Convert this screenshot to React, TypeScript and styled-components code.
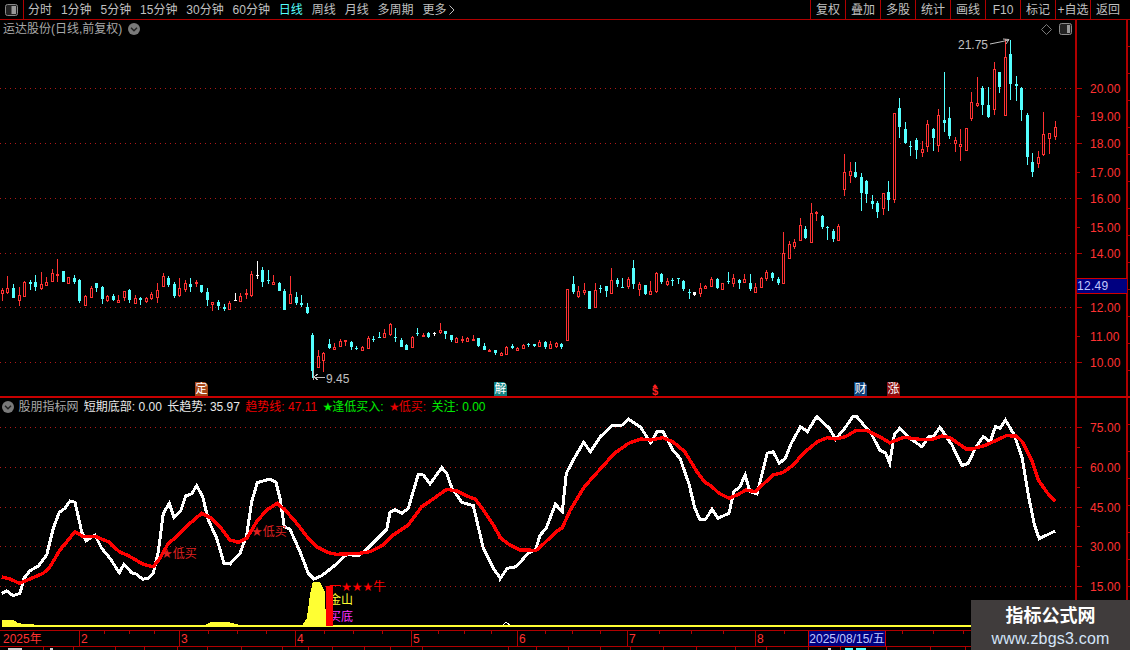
import React from 'react';
import styled, { createGlobalStyle } from 'styled-components';

const RED = '#b00000';
const FONT = '"Liberation Sans", "Noto Sans CJK SC", sans-serif';

const Global = createGlobalStyle`
  html, body { margin: 0; padding: 0; background: #000; overflow: hidden; }
  #root { width: 1130px; height: 650px; }
`;

const Page = styled.div`
  position: relative;
  width: 1130px;
  height: 650px;
  background: #000;
  overflow: hidden;
  display: flex;
  flex-direction: column;
  font: 12px/1 ${FONT};
  color: #c0c0c0;
`;

/* ---------- toolbar ---------- */
const Toolbar = styled.div`
  flex: none;
  height: 19px;
  display: flex;
  align-items: stretch;
  border-bottom: 1px solid ${RED};
`;
const ToggleCell = styled.div`
  width: 23px;
  border-right: 1px solid ${RED};
  display: flex;
  align-items: center;
  justify-content: center;
  box-sizing: content-box;
`;
const Periods = styled.div`
  display: flex;
  align-items: center;
  gap: 8.9px;
  padding-left: 4px;
`;
const Period = styled.span<{ $active?: boolean }>`
  color: ${(p) => (p.$active ? '#54ffff' : '#c0c0c0')};
  white-space: nowrap;
`;
const Chevron = styled.svg`
  display: inline-block;
  margin-left: 3px;
  vertical-align: -1px;
`;
const Actions = styled.div`
  margin-left: auto;
  padding-right: 5px;
  display: flex;
`;
const Action = styled.div`
  width: 35px;
  box-sizing: border-box;
  border-left: 1px solid ${RED};
  display: flex;
  align-items: center;
  justify-content: center;
  white-space: nowrap;
`;

/* ---------- panels ---------- */
const Panel = styled.div<{ $height: number }>`
  flex: none;
  height: ${(p) => p.$height}px;
  display: flex;
`;
const ChartColumn = styled.div`
  position: relative;
  width: 1075px;
  display: flex;
  flex-direction: column;
`;
const AxisColumn = styled.div`
  position: relative;
  width: 49px;
  border-left: 2px solid ${RED};
`;
const Gutter = styled.div`
  width: 2px;
  border-left: 2px solid ${RED};
  flex: 1;
  background: repeating-linear-gradient(to bottom, transparent 0 26px, ${RED} 26px 27px);
`;
const IndicatorWrap = styled.div`
  flex: none;
  border-top: 2px solid #c80000;
`;
const TitleRow = styled.div`
  height: 18px;
  flex: none;
  display: flex;
  align-items: center;
  gap: 6px;
  padding: 0 3px;
  color: #a8a8a8;
`;
const TitleIcons = styled.div`
  margin-left: auto;
  display: flex;
  align-items: center;
  gap: 7px;
`;
const LegendRow = styled.div`
  height: 17px;
  flex: none;
  display: flex;
  align-items: center;
  gap: 5.4px;
  padding-left: 2px;
  white-space: nowrap;
`;
const LegendName = styled.span`
  color: #a8a8a8;
  margin: 0 0 0 -1px;
`;
const LegendItem = styled.span<{ $color: string }>`
  color: ${(p) => p.$color};
`;
const Star = styled.span`
  font-family: "DejaVu Sans", sans-serif;
  font-size: 12px;
  margin-right: -1px;
`;
const ChartSvg = styled.svg`
  display: block;
  flex: none;
`;
const AxisSvg = styled.svg`
  display: block;
`;
const AxisLabel = styled.text`
  fill: #ff3232;
  font: 12px ${FONT};
  letter-spacing: 0.1px;
`;
const Note = styled.text<{ $color: string }>`
  fill: ${(p) => p.$color};
  font: 12px ${FONT};
`;
const EventGlyph = styled.text`
  fill: #ff2020;
  font: bold 11px "Liberation Sans", sans-serif;
`;
const PriceTag = styled.div<{ $top: number }>`
  position: absolute;
  left: 0;
  top: ${(p) => p.$top}px;
  width: 50px;
  height: 16px;
  box-sizing: border-box;
  background: #000080;
  border-top: 1px solid #d00000;
  border-bottom: 1px solid #d00000;
  color: #c0c8ff;
  padding-left: 0;
  display: flex;
  align-items: center;
  letter-spacing: 0.3px;
`;
const EventBadge = styled.div<{ $left: number; $bg: string }>`
  position: absolute;
  left: ${(p) => p.$left}px;
  top: 362px;
  width: 13px;
  height: 14px;
  background: ${(p) => p.$bg};
  color: #fff;
  display: flex;
  align-items: center;
  justify-content: center;
  clip-path: polygon(0 0, 10px 0, 13px 3px, 13px 14px, 0 14px);
  line-height: 1;
`;

/* ---------- time axis ---------- */
const TimeAxis = styled.div`
  position: relative;
  flex: none;
  height: 15px;
  display: flex;
  border-top: 1px solid ${RED};
  border-bottom: 1px solid ${RED};
`;
const MonthCell = styled.div<{ $width: number; $first?: boolean }>`
  flex: none;
  width: ${(p) => p.$width}px;
  box-sizing: border-box;
  border-left: ${(p) => (p.$first ? 'none' : `1px solid ${RED}`)};
  padding-left: ${(p) => (p.$first ? 3 : 1)}px;
  color: #ff3232;
  display: flex;
  align-items: center;
`;
const DateBox = styled.div`
  position: absolute;
  left: 808px;
  top: 0;
  width: 78px;
  height: 15px;
  box-sizing: border-box;
  background: #000080;
  border-left: 1px solid #d00000;
  border-right: 1px solid #d00000;
  color: #c0c8ff;
  display: flex;
  align-items: center;
  justify-content: center;
  white-space: nowrap;
`;
const TickLayer = styled.svg`
  position: absolute;
  left: 0;
  top: 0;
`;
const FooterSvg = styled.svg`
  display: block;
  flex: none;
`;

/* ---------- watermark ---------- */
const Watermark = styled.div`
  position: absolute;
  left: 971px;
  top: 600px;
  width: 159px;
  height: 50px;
  background: #403c3c;
  display: flex;
  flex-direction: column;
  align-items: center;
  padding-top: 6px;
  box-sizing: border-box;
  gap: 3px;
`;
const MarkTitle = styled.div`
  color: #fff;
  font: bold 18px/21px ${FONT};
`;
const MarkUrl = styled.div`
  color: #d4e4f8;
  font: 16px/17px ${FONT};
  letter-spacing: 0.2px;
`;

/* ---------- data ---------- */
const parse = (s: string, base: number) =>
  s.trim().split(',').map((r) => {
    const [t, a, b, c, d] = r.trim().split(' ');
    return { t, hi: base + +a / 3, top: base + +b / 3, bot: base + +c / 3, lo: base + +d / 3 };
  });

const candles = [
  ...parse(`r 115 120 130 152,r 78 113 125 132,c 102 113 144 144,r 110 135 150 167,r 93 96 137 137,c 90 95 101 120,c 75 95 110 123,r 67 102 114 120,r 80 96 104 107,r 57 69 92 95,r 27 72 73 95,c 62 62 95 95,r 80 82 100 102,c 75 84 96 103,c 88 90 152 158,r 135 138 164 165,r 108 114 141 143,c 98 98 113 127,c 108 111 148 161,r 135 139 152 155,c 132 138 150 152,r 136 151 158 158,r 123 124 141 152,c 117 120 150 159,r 135 145 159 160,c 142 145 150 165,r 141 143 151 160,r 125 131 143 150,r 99 121 143 158,r 70 78 107 110,c 78 84 104 110,c 95 102 139 143,r 84 115 135 140,r 90 100 119 127,c 84 103 110 126,r 91 96 97 110,c 105 105 127 130,c 115 127 150 168,r 156 157 163 183,c 150 156 168 180,c 162 170 176 183,r 154 159 176 176,w 130 150 151 152,r 128 138 152 154,r 118 130 134 148,r 64 72 134 140,w 33 76 77 88,c 52 60 95 110,c 60 90 92 102,r 75 96 101 102,c 96 99 123 124,c 117 123 179 179,r 78 133 161 162,c 127 141 159 165,c 136 159 164 172,c 160 171 189 191,c 250 255 362 385,r 300 318 350 352,r 305 310 332 366,c 267 282 295 297,r 278 292 299 300,r 268 273 287 288,r 270 271 273 288,c 272 276 290 299,c 287 295 296 300,r 287 290 300 303,r 257 265 294 297,c 257 266 266 275,c 247 260 261 264,r 238 249 261 264,r 220 222 252 258,c 235 261 262 276,c 265 270 290 291,c 282 286 299 300,r 258 260 291 294,c 235 248 249 258,r 250 254 256 258,c 247 250 261 264,w 246 248 249 258,r 220 240 245 252,c 243 244 252 267,c 256 256 270 276,r 262 264 275 276,r 258 267 269 279,r 262 265 273 276,r 255 267 268 273,c 264 265 287 290,c 280 288 300 301,r 296 299 301 306,c 300 301 309 315,r 307 308 315 315,r 288 290 311 312,c 282 288 294 298,r 290 294 299 303,r 282 286 296 297,c 279 281 282 292,c 282 283 287 291,r 270 277 288 289,c 273 276 292 298,r 274 283 294 295,r 275 278 286 293,c 278 283 291 297,r 117 118 270 272,c 78 102 126 132,r 108 123 138 145,r 98 119 126 135,c 123 124 176 178,r 98 121 173 174,c 105 115 116 128,c 108 108 123 141,r 54 91 131 132,c 83 90 102 110,c 83 110 112 115,r 81 87 109 116,c 30 55 102 117,r 96 101 117 138,c 104 105 132 136,r 93 124 134 136,r 66 69 123 130,c 68 72 96 102,r 84 92 101 107,c 84 90 94 108,c 84 85 87 102`, 250),
  ...parse(`c 570 573 596 602,c 597 607 608 626,w 605 607 615 617,r 578 595 611 620,r 585 587 594 596,r 562 567 588 590,c 565 567 594 597,r 578 580 597 600,c 546 573 576 582,r 552 565 581 590,c 568 570 578 596,r 552 568 576 580,c 552 579 597 603,r 578 590 605 606,r 560 563 590 595,r 540 547 564 572,c 546 549 563 572,c 562 567 578 585,r 427 490 581 582,r 453 463 505 507,r 448 456 468 476,r 385 406 452 454,c 408 417 444 447,r 340 370 458 459,r 364 367 371 392,c 375 378 412 416,c 408 410 411 450,c 418 423 446 456,r 403 408 449 450,r 192 247 299 318,r 216 244 257 280,c 216 247 261 264,c 248 262 308 363,c 270 272 311 340,c 315 334 342 357,c 332 338 366 384,r 310 310 356 375,c 273 307 330 363,r 69 70 329 339`, 90),
  ...parse(`c 190 219 276 309,c 262 282 325 327,c 319 334 335 362,c 309 316 345 372,r 319 343 353 366,r 255 268 335 351,c 279 282 309 348,r 222 241 332 351,c 111 255 264 291,c 216 249 303 312,r 306 316 326 351,r 282 328 335 378,r 280 280 345 347,r 171 202 250 258,r 126 204 210 216,c 153 159 210 240,c 156 210 246 249,r 81 103 223 240,c 111 111 156 174,r 12 67 242 243,c 15 57 147 195,c 123 147 153 198,c 156 159 225 258,c 234 240 366 390,c 354 381 411 426,r 349 366 384 399,r 231 297 357 363,r 294 295 311 357,r 258 277 303 315`, 35),
];

const COLORS: Record<string, string> = { r: '#ff3232', c: '#54ffff', w: '#ffffff' };

const fromLeft = (pts: number[][]) => pts.map(([x, y]) => [x / 3, 395 + y / 3]);
const fromRight = (pts: number[][]) => pts.map(([x, y]) => [500 + x / 2.489, 395 + y / 3]);
const toPoints = (pts: number[][]) => pts.map(([x, y]) => `${x.toFixed(1)},${y.toFixed(1)}`).join(' ');

const whiteLine = toPoints([
  ...fromLeft([[5,595],[20,588],[40,602],[60,595],[72,550],[90,527],[115,513],[140,480],[160,400],[178,352],[195,340],[210,318],[225,322],[245,410],[258,437],[285,420],[305,460],[330,490],[358,533],[372,508],[395,533],[410,538],[428,553],[445,550],[460,535],[475,470],[490,355],[508,325],[522,368],[542,348],[557,303],[575,296],[590,272],[608,305],[625,375],[650,430],[672,505],[690,507],[720,475],[740,420],[755,320],[772,263],[810,252],[828,262],[840,310],[853,395],[870,403],[900,470],[925,535],[942,552],[965,542],[1000,515],[1040,478],[1075,482],[1100,463],[1160,403],[1170,352],[1185,344],[1205,355],[1225,340],[1255,238],[1270,240],[1290,267],[1325,218],[1340,235],[1355,278],[1385,322],[1420,332],[1450,460],[1480,520],[1500,548]]),
  ...fromRight([[0,552],[18,520],[40,515],[70,475],[88,465],[100,420],[115,400],[138,328],[155,350],[165,235],[185,190],[208,142],[225,170],[250,125],[278,92],[305,90],[320,73],[350,97],[375,143],[392,108],[405,108],[430,165],[448,190],[470,265],[485,340],[497,372],[512,372],[528,343],[542,370],[570,355],[582,290],[597,275],[610,240],[622,290],[640,297],[665,175],[680,170],[695,205],[710,190],[725,145],[748,95],[765,110],[788,65],[820,100],[835,133],[858,100],[878,65],[888,65],[925,118],[945,165],[960,175],[970,205],[982,118],[995,100],[1020,130],[1050,155],[1068,123],[1080,123],[1095,97],[1125,150],[1150,212],[1165,205],[1185,155],[1203,125],[1220,140],[1233,95],[1245,100],[1258,75],[1280,120],[1300,190],[1315,300],[1330,390],[1342,431],[1382,408]]),
]);
const redLine = toPoints([
  ...fromLeft([[5,546],[30,552],[58,565],[90,552],[130,535],[150,515],[180,465],[225,410],[250,425],[285,424],[325,440],[358,470],[385,482],[430,508],[460,515],[480,490],[505,445],[530,425],[570,385],[605,355],[635,370],[660,395],[690,435],[715,442],[740,430],[770,380],[800,345],[832,325],[860,350],[890,385],[925,430],[950,455],[985,473],[1010,478],[1080,475],[1110,470],[1150,450],[1180,420],[1225,390],[1265,335],[1295,315],[1340,283],[1370,288],[1400,303],[1425,312],[1450,345],[1480,390],[1500,425]]),
  ...fromRight([[0,428],[25,450],[50,465],[90,466],[110,445],[140,410],[155,398],[175,345],[210,275],[240,235],[285,175],[320,145],[350,132],[375,135],[405,128],[430,140],[460,170],[490,230],[510,262],[525,272],[545,295],[570,310],[590,300],[612,285],[635,290],[680,240],[705,232],[730,210],[755,175],[790,140],[815,128],[835,132],[860,125],[885,107],[915,107],[945,125],[970,143],[1005,127],[1045,133],[1075,133],[1100,123],[1120,128],[1160,162],[1175,162],[1210,150],[1260,122],[1285,123],[1300,140],[1325,200],[1340,255],[1360,290],[1382,320]]),
]);
const humpA = toPoints(fromLeft([[6,693],[6,675],[40,675],[55,685],[100,688],[105,693]]));
const humpB = toPoints(fromLeft([[610,693],[630,682],[680,680],[720,690],[725,693]]));
const humpC = toPoints(fromLeft([[905,693],[920,670],[930,600],[938,560],[960,560],[975,590],[978,693]]));

const priceLabels: [string, number, boolean][] = [
  ['20.00', 88, true], ['19.00', 116, false], ['18.00', 143, true], ['17.00', 172, false],
  ['16.00', 198, true], ['15.00', 227, false], ['14.00', 253, true], ['13.00', 282, false],
  ['12.00', 307, true], ['11.00', 336, false], ['10.00', 362, true],
];
const priceGrid = [88, 143, 198, 253, 307, 362];
const indLabels: [string, number][] = [['75.00', 427], ['60.00', 467], ['45.00', 507], ['30.00', 546], ['15.00', 586]];
const indMinor = [447, 487, 526, 566];
const months: [string, number][] = [['2025年', 79], ['2', 100], ['3', 116], ['4', 116], ['5', 106], ['6', 110], ['7', 128], ['8', 375]];
const timeTicks = [104,129,154,208,237,266,324,353,382,438,464,491,545,572,600,659,691,723,784,902,933,963];
const footerTicks = [43,73,115,144,177,207,241,282,308,332,364,390,422,508,536,568,600,630,663,696,735,766,808,840,886,930,965];
const periods = ['分时','1分钟','5分钟','15分钟','30分钟','60分钟','日线','周线','月线','多周期'];
const actions = ['复权','叠加','多股','统计','画线','F10','标记','+自选','返回'];
const badges: [string, number, string][] = [['定', 195, '#a8481a'], ['解', 494, '#0f8080'], ['财', 854, '#0a3f78'], ['涨', 887, '#8a0e0e']];

/* ---------- small drawings ---------- */
const ToggleIcon = ({ split }: { split: number }) => (
  <svg width="13" height="12" viewBox="0 0 13 12">
    <rect x="0.5" y="0.5" width="12" height="11" rx="2" fill="#222" stroke="#8a8a8a" />
    <rect x={split} y="2" width={11 - split} height="8" fill="#9a9a9a" />
  </svg>
);
const RoundChevron = () => (
  <svg width="12" height="12" viewBox="0 0 12 12">
    <circle cx="6" cy="6" r="6" fill="#7a7a7a" />
    <path d="M3 4.8 L6 7.8 L9 4.8" fill="none" stroke="#222" strokeWidth="1.4" />
  </svg>
);
const Diamond = () => (
  <svg width="11" height="11" viewBox="0 0 11 11">
    <path d="M5.5 0.5 L10.5 5.5 L5.5 10.5 L0.5 5.5 Z" fill="none" stroke="#7a7a7a" />
  </svg>
);

function Candles() {
  return (
    <g shapeRendering="crispEdges">
      {candles.map((k, i) => {
        const cx = Math.round(1.9 + 5.54 * i);
        const col = COLORS[k.t];
        const wick = { fill: col };
        if (k.t === 'r') {
          return (
            <g key={i}>
              <rect x={cx} y={k.hi} width={1} height={Math.max(k.top - k.hi, 0)} {...wick} />
              <rect x={cx} y={k.bot} width={1} height={Math.max(k.lo - k.bot, 0)} {...wick} />
              <rect x={cx - 0.5} y={Math.round(k.top) + 0.5} width={2} height={Math.max(Math.round(k.bot - k.top), 1)} fill="#000" stroke={col} />
            </g>
          );
        }
        return (
          <g key={i}>
            <rect x={cx} y={k.hi} width={1} height={k.lo - k.hi} {...wick} />
            <rect x={cx - 1} y={k.top} width={3} height={Math.max(k.bot - k.top, 1)} {...wick} />
          </g>
        );
      })}
    </g>
  );
}

const Grid = ({ ys }: { ys: number[] }) => (
  <g shapeRendering="crispEdges">
    {ys.map((y) => (
      <line key={y} x1="0" x2="1075" y1={y + 0.5} y2={y + 0.5} stroke="#b01818" strokeDasharray="1 4" />
    ))}
  </g>
);

export default function App() {
  return (
    <Page>
      <Global />
      <Toolbar>
        <ToggleCell><ToggleIcon split={6.5} /></ToggleCell>
        <Periods>
          {periods.map((p) => <Period key={p} $active={p === '日线'}>{p}</Period>)}
          <Period>
            更多
            <Chevron width="6" height="10" viewBox="0 0 6 10">
              <path d="M0.5 0.5 L5 5 L0.5 9.5" fill="none" stroke="#c0c0c0" />
            </Chevron>
          </Period>
        </Periods>
        <Actions>
          {actions.map((a) => <Action key={a}>{a}</Action>)}
        </Actions>
      </Toolbar>

      <Panel $height={376}>
        <ChartColumn>
          <TitleRow>
            <span>运达股份(日线,前复权)</span>
            <RoundChevron />
            <TitleIcons>
              <Diamond />
              <ToggleIcon split={8} />
            </TitleIcons>
          </TitleRow>
          <ChartSvg width="1075" height="358" viewBox="0 38 1075 358">
            <Grid ys={priceGrid} />
            <Candles />
            <Note $color="#c0c0c0" x="958" y="49">21.75</Note>
            <path d="M990 44 L1000 42 L1009 40 M1003 39 L1009 39.5 L1006 44" fill="none" stroke="#c0c0c0" />
            <Note $color="#c0c0c0" x="326" y="383">9.45</Note>
            <path d="M313 370 V380 M325 377 H314 M318 374 L314 377 L318 380" fill="none" stroke="#c0c0c0" shapeRendering="crispEdges" />
            <path d="M655 384 L652.5 387 H657.5 Z" fill="#ff2020" />
            <EventGlyph x="652" y="394.5">$</EventGlyph>
          </ChartSvg>
          {badges.map(([t, l, bg]) => <EventBadge key={t} $left={l} $bg={bg}>{t}</EventBadge>)}
        </ChartColumn>
        <AxisColumn>
          <AxisSvg width="49" height="376" viewBox="0 20 49 376">
            {priceLabels.map(([t, y, major]) => (
              <g key={t}>
                <rect x="0" y={y} width={major ? 5 : 3} height="1" fill={RED} />
                <AxisLabel x="13" y={y + 5}>{t}</AxisLabel>
              </g>
            ))}
          </AxisSvg>
          <PriceTag $top={258}>12.49</PriceTag>
        </AxisColumn>
        <Gutter />
      </Panel>

      <IndicatorWrap>
        <Panel $height={232}>
          <ChartColumn>
            <LegendRow>
              <RoundChevron />
              <LegendName>股朋指标网</LegendName>
              <LegendItem $color="#e8e8e8">短期底部: 0.00</LegendItem>
              <LegendItem $color="#e8e8e8">长趋势: 35.97</LegendItem>
              <LegendItem $color="#f00000">趋势线: 47.11</LegendItem>
              <LegendItem $color="#00ee00"><Star>★</Star>逢低买入:</LegendItem>
              <LegendItem $color="#e80000"><Star>★</Star>低买:</LegendItem>
              <LegendItem $color="#00ee00">关注: 0.00</LegendItem>
            </LegendRow>
            <ChartSvg width="1075" height="215" viewBox="0 415 1075 215">
              <Grid ys={[427, 467, 507, 546, 586]} />
              <Note $color="#ff0000" x="329" y="591">一<tspan fontFamily="DejaVu Sans" fontSize="12">★★★</tspan>牛</Note>
              <Note $color="#ffff33" x="329" y="604">金山</Note>
              <Note $color="#ff33ff" x="329" y="621">买底</Note>
              <g shapeRendering="crispEdges">
                <polygon points={humpA} fill="#ffff33" />
                <polygon points={humpB} fill="#ffff33" />
                <polygon points={humpC} fill="#ffff33" />
                <rect x="2" y="625" width="1073" height="2" fill="#ffff33" />
                <rect x="326" y="586" width="7" height="40" fill="#ff0000" />
                <path d="M503 625 L506 622 L510 625" fill="none" stroke="#fff" />
                <polyline points={whiteLine} fill="none" stroke="#ffffff" strokeWidth="3" />
                <polyline points={redLine} fill="none" stroke="#ff0000" strokeWidth="3.4" />
              </g>
              <Note $color="#e02020" x="161" y="558"><tspan fontFamily="DejaVu Sans" fontSize="13">★</tspan>低买</Note>
              <Note $color="#e02020" x="251" y="536"><tspan fontFamily="DejaVu Sans" fontSize="13">★</tspan>低买</Note>
            </ChartSvg>
          </ChartColumn>
          <AxisColumn>
            <AxisSvg width="49" height="232" viewBox="0 398 49 232">
              {indLabels.map(([t, y]) => (
                <g key={t}>
                  <rect x="0" y={y} width="5" height="1" fill={RED} />
                  <AxisLabel x="13" y={y + 5}>{t}</AxisLabel>
                </g>
              ))}
              {indMinor.map((y) => <rect key={y} x="0" y={y} width="3" height="1" fill={RED} />)}
            </AxisSvg>
          </AxisColumn>
          <Gutter />
        </Panel>
      </IndicatorWrap>

      <TimeAxis>
        {months.map(([t, w], i) => <MonthCell key={t} $width={w} $first={i === 0}>{t}</MonthCell>)}
        <TickLayer width="1130" height="3" viewBox="0 0 1130 3">
          {timeTicks.map((x) => <rect key={x} x={x} y="0" width="1" height="3" fill={RED} />)}
        </TickLayer>
        <DateBox>2025/08/15/五</DateBox>
      </TimeAxis>
      <FooterSvg width="1130" height="3" viewBox="0 647 1130 3">
        {footerTicks.map((x) => <rect key={x} x={x} y="647" width="1" height="3" fill={RED} />)}
        <rect x="8" y="648" width="14" height="2" fill="#d0d0d0" />
        <rect x="50" y="648" width="3" height="2" fill="#d0d0d0" />
        <rect x="828" y="648" width="3" height="2" fill="#d0d0d0" />
        <rect x="845" y="648" width="8" height="2" fill="#54ffff" />
        <rect x="856" y="648" width="10" height="2" fill="#54ffff" />
      </FooterSvg>

      <Watermark>
        <MarkTitle>指标公式网</MarkTitle>
        <MarkUrl>www.zbgs3.com</MarkUrl>
      </Watermark>
    </Page>
  );
}
